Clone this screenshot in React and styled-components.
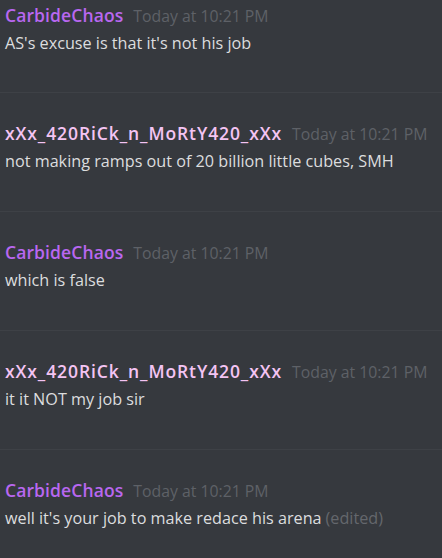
import styled, { createGlobalStyle } from "styled-components"

const GlobalStyle = createGlobalStyle`
  html, body {
    margin: 0;
    padding: 0;
    background: #36393e;
  }
`

const Chat = styled.div`
  width: 442px;
  height: 558px;
  overflow: hidden;
  background: #36393e;
  font-family: "Open Sans", sans-serif;
`

const Group = styled.div`
  box-sizing: border-box;
  height: ${(p) => (p.first ? "92px" : "119px")};
  padding: ${(p) => (p.first ? "4px" : "29px")} 5px 0;
  border-top: ${(p) => (p.first ? "none" : "1px solid #3e4146")};
`

const Header = styled.div`
  display: flex;
  align-items: baseline;
  height: 22px;
  line-height: 22px;
  white-space: nowrap;
`

const Name = styled.span`
  color: ${(p) => p.color};
  font-size: 17.5px;
  font-weight: 600;
  letter-spacing: ${(p) => (p.wide ? "0.9px" : "0.1px")};
  margin-right: 10px;
`

const Timestamp = styled.span`
  color: #5e6167;
  font-size: 15.8px;
`

const Body = styled.div`
  margin-top: 6px;
  line-height: 22px;
  font-size: 16.2px;
  color: #dcddde;
  white-space: nowrap;
`

const Edited = styled.span`
  color: #64676c;
  margin-left: 4px;
`

const CARBIDE = "#b967f0"
const RICK = "#f4c4f3"

const carbide = { name: "CarbideChaos", color: CARBIDE }
const rick = { name: "xXx_420RiCk_n_MoRtY420_xXx", color: RICK, wide: true }

const messages = [
  { ...carbide, text: "AS's excuse is that it's not his job" },
  { ...rick, text: "not making ramps out of 20 billion little cubes, SMH" },
  { ...carbide, text: "which is false" },
  { ...rick, text: "it it NOT my job sir" },
  { ...carbide, text: "well it's your job to make redace his arena", edited: true },
]

export default function App() {
  return (
    <Chat>
      <GlobalStyle />
      {messages.map((m, i) => (
        <Group key={i} first={i === 0}>
          <Header>
            <Name color={m.color} wide={m.wide}>{m.name}</Name>
            <Timestamp>Today at 10:21 PM</Timestamp>
          </Header>
          <Body>
            {m.text}
            {m.edited && <Edited>(edited)</Edited>}
          </Body>
        </Group>
      ))}
    </Chat>
  )
}
